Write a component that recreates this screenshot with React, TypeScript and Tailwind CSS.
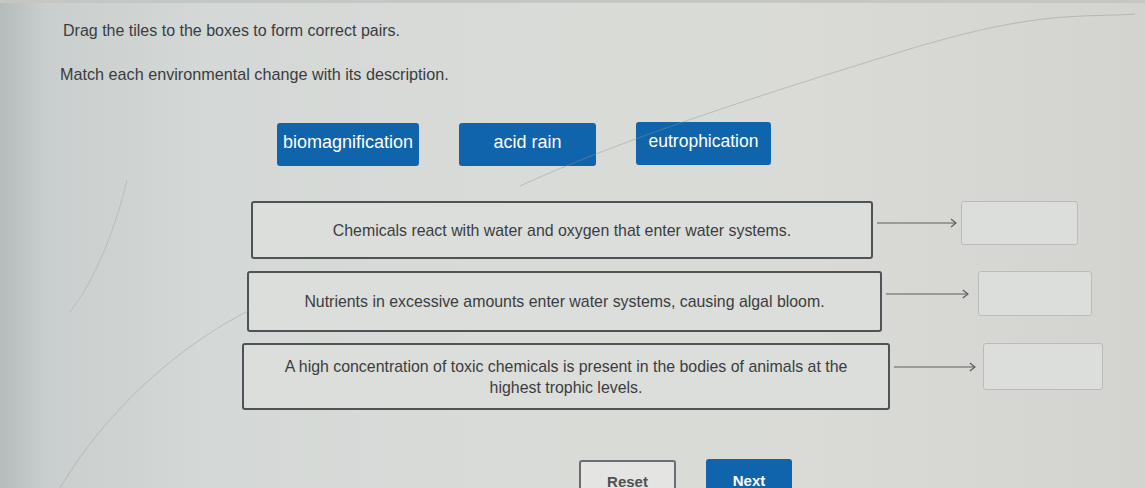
import React from "react";

const rows = [
  { text: "Chemicals react with water and oxygen that enter water systems.", ml: "ml-[251px]", w: "w-[622px]", h: "h-[58px]", aw: "w-[80px]", tml: "ml-[4px]", tw: "w-[117px]", th: "h-[44px]", mt: "mt-[35px]" },
  { text: "Nutrients in excessive amounts enter water systems, causing algal bloom.", ml: "ml-[247px]", w: "w-[635px]", h: "h-[61px]", aw: "w-[83px]", tml: "ml-[9px]", tw: "w-[114px]", th: "h-[45px]", mt: "mt-[12px]" },
  { text: "A high concentration of toxic chemicals is present in the bodies of animals at the highest trophic levels.", ml: "ml-[242px]", w: "w-[648px]", h: "h-[67px]", aw: "w-[82px]", tml: "ml-[7px]", tw: "w-[120px]", th: "h-[47px]", mt: "mt-[11px]" },
];

function Arrow({ w }: { w: string }) {
  return (
    <div className={`${w} ml-[4px] flex items-center`}>
      <svg className="w-full h-[12px]" viewBox="0 0 80 12" preserveAspectRatio="none">
        <line x1="0" y1="6" x2="79" y2="6" stroke="#5a5e60" strokeWidth="1.2" />
        <polyline points="74,2 79,6 74,10" fill="none" stroke="#5a5e60" strokeWidth="1.2" />
      </svg>
    </div>
  );
}

export default function App() {
  return (
    <div
      className="relative w-[1145px] h-[488px] overflow-hidden text-[#3a3d40] bg-[linear-gradient(to_right,#b4bbbb_0%,#c9cfce_4%,#d4d8d6_18%,#d9dbd8_45%,#dadbd7_70%,#d3d4cf_100%)]"
      style={{ fontFamily: '"Liberation Sans", Arial, sans-serif' }}
    >
      <div className="h-[3px] bg-[#c4c7c4]" />
      <div className="pl-[63px] pt-[19px] text-[16px] leading-[18px]">Drag the tiles to the boxes to form correct pairs.</div>
      <div className="pl-[60px] mt-[25px] text-[16.2px] leading-[18px]">Match each environmental change with its description.</div>

      <div className="flex ml-[277px] mt-[40px] gap-[40px]">
        <div className="w-[142px] h-[43px] pb-[4px] rounded-[3px] bg-[#1064ab] text-white text-[18px] flex items-center justify-center">biomagnification</div>
        <div className="w-[137px] h-[43px] pb-[4px] rounded-[3px] bg-[#1064ab] text-white text-[18px] flex items-center justify-center">acid rain</div>
        <div className="w-[135px] h-[43px] pb-[4px] -mt-[1px] rounded-[3px] bg-[#1064ab] text-white text-[17.5px] flex items-center justify-center">eutrophication</div>
      </div>

      {rows.map((r, i) => (
        <div key={i} className={`flex items-start ${r.ml} ${r.mt}`}>
          <div className={`${r.w} ${r.h} border-2 border-[#4e5356] rounded-[3px] bg-[#dcdedb] flex items-center justify-center text-center text-[15.9px] leading-[21px] px-[24px]`}>
            {r.text}
          </div>
          <div className={`flex items-center ${r.th}`}>
            <Arrow w={r.aw} />
            <div className={`${r.tml} ${r.tw} ${r.th} border border-[#b9bcbb] rounded-[3px] bg-[#dcdedc]`} />
          </div>
        </div>
      ))}

      <div className="flex ml-[579px] mt-[50px] gap-[30px]">
        <div className="w-[97px] h-[44px] border-2 border-[#6a6e70] rounded-[3px] bg-[#e4e5e2] text-[#4e5255] font-bold text-[15px] flex items-center justify-center">Reset</div>
        <div className="w-[86px] h-[44px] -mt-[1px] rounded-[3px] bg-[#1064ab] text-white font-bold text-[15px] flex items-center justify-center">Next</div>
      </div>

      <svg className="absolute inset-0 pointer-events-none" width="1145" height="488" viewBox="0 0 1145 488">
        <path d="M520 186 C 620 140, 760 95, 900 52 S 1080 18, 1135 14" fill="none" stroke="#8f9591" strokeOpacity="0.45" strokeWidth="1" />
        <path d="M60 488 C 100 420, 170 350, 250 310" fill="none" stroke="#8f9591" strokeOpacity="0.4" strokeWidth="1" />
        <path d="M127 180 C 115 230, 95 280, 70 312" fill="none" stroke="#8f9591" strokeOpacity="0.35" strokeWidth="1" />
      </svg>
    </div>
  );
}
